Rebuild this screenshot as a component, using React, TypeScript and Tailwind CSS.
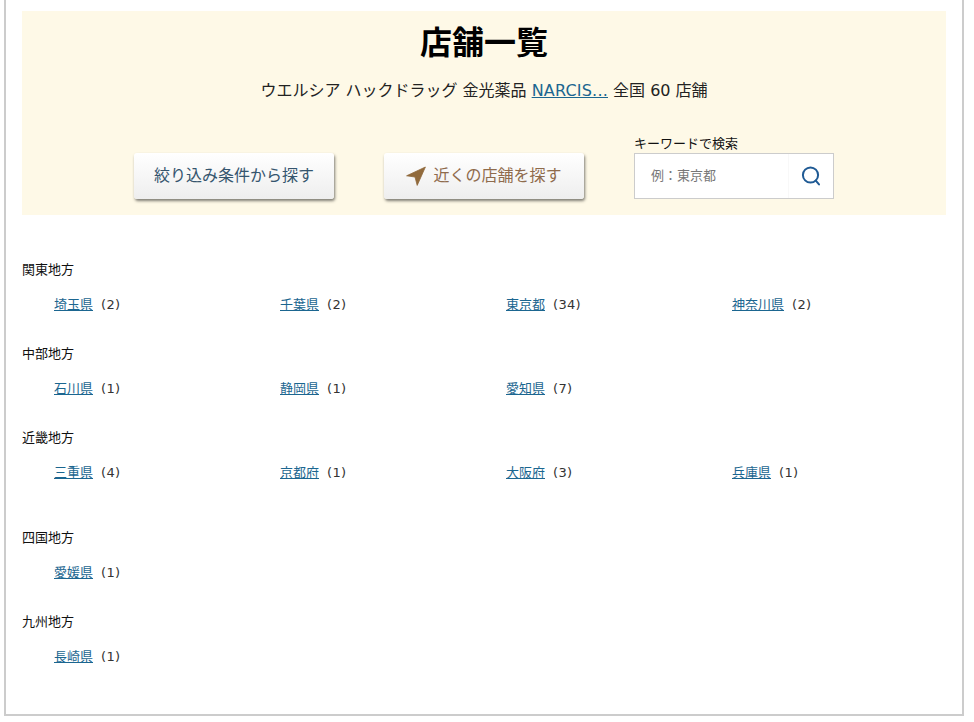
import React from 'react';

type Area = {
  name: string;
  prefs: [string, number][];
  className: string;
};

const areas: Area[] = [
  { name: '関東地方', className: 'mt-[46px]', prefs: [['埼玉県', 2], ['千葉県', 2], ['東京都', 34], ['神奈川県', 2]] },
  { name: '中部地方', className: 'mt-[31px]', prefs: [['石川県', 1], ['静岡県', 1], ['愛知県', 7]] },
  { name: '近畿地方', className: 'mt-[31px]', prefs: [['三重県', 4], ['京都府', 1], ['大阪府', 3], ['兵庫県', 1]] },
  { name: '四国地方', className: 'mt-[47px]', prefs: [['愛媛県', 1]] },
  { name: '九州地方', className: 'mt-[31px]', prefs: [['長崎県', 1]] },
];

function AreaBlock({ area }: { area: Area }) {
  return (
    <section className={area.className}>
      <h2 className="h-[18px] text-[13px] leading-[18px] font-normal text-[#111]">{area.name}</h2>
      <ul className="mt-[17px] grid w-[904px] grid-cols-4">
        {area.prefs.map(([pref, count]) => (
          <li key={pref} className="h-[18px] pl-8 text-[13px] leading-[18px] text-[#333]">
            <a href="#" className="text-[#1b6690] underline">{pref}</a>
            <span className="ml-2 tracking-[0.3px]">({count})</span>
          </li>
        ))}
      </ul>
    </section>
  );
}

export default function App() {
  return (
    <div className="h-[722px] w-[974px] bg-white font-['DejaVu_Sans','Noto_Sans_CJK_JP',sans-serif]">
      <div className="ml-1 h-[716px] w-[960px] border-2 border-t-0 border-[#cccccc] px-4 pt-[11px]">
        {/* 検索エリア */}
        <div className="h-[204px] w-[924px] bg-[#fef9e7]">
          <h1 className="pt-[11px] text-center text-[32px] leading-[42px] font-bold text-black">店舗一覧</h1>
          <p className="mt-[15px] text-center text-base leading-6 text-[#222]">
            ウエルシア ハックドラッグ 金光薬品 <a href="#" className="tracking-[0.2px] text-[#1b6690] underline">NARCIS...</a> 全国 60 店舗
          </p>
          <div className="mt-[36px] flex items-end justify-center gap-[50px]">
            <button className="h-[46px] w-[200px] rounded-[3px] bg-gradient-to-b from-white to-[#eeeeee] text-base text-[#35556e] shadow-[1px_2px_3px_rgba(0,0,0,0.5)]">
              絞り込み条件から探す
            </button>
            <button className="flex h-[46px] w-[200px] items-center justify-center gap-[7px] rounded-[3px] bg-gradient-to-b from-white to-[#eeeeee] text-base text-[#8f6b4c] shadow-[1px_2px_3px_rgba(0,0,0,0.5)]">
              <svg width="20" height="20" viewBox="0 0 20 20" className="shrink-0">
                <path d="M19.4 1 L0.6 9.8 L9 11 L11.2 19.4 Z" fill="#916a3c" stroke="#916a3c" strokeWidth="0.8" strokeLinejoin="round" />
              </svg>
              近くの店舗を探す
            </button>
            <div className="w-[200px]">
              <label className="block h-[14px] text-[13px] leading-[10px] text-[#111]">キーワードで検索</label>
              <div className="flex h-[46px] border border-[#cccccc] bg-white">
                <div className="flex-1 pl-4 text-[13px] leading-[44px] text-[#777]">例：東京都</div>
                <div className="flex w-[45px] items-center justify-center border-l border-[#f8f8f8]">
                  <svg width="20" height="20" viewBox="0 0 20 20" fill="none" stroke="#1f5a94" strokeWidth="2">
                    <circle cx="9.5" cy="9" r="7.6" />
                    <path d="M14.8 14.6 L18 18.4" strokeLinecap="round" />
                  </svg>
                </div>
              </div>
            </div>
          </div>
        </div>

        {/* 地方別リスト */}
        {areas.map((area) => (
          <AreaBlock key={area.name} area={area} />
        ))}
      </div>
    </div>
  );
}
